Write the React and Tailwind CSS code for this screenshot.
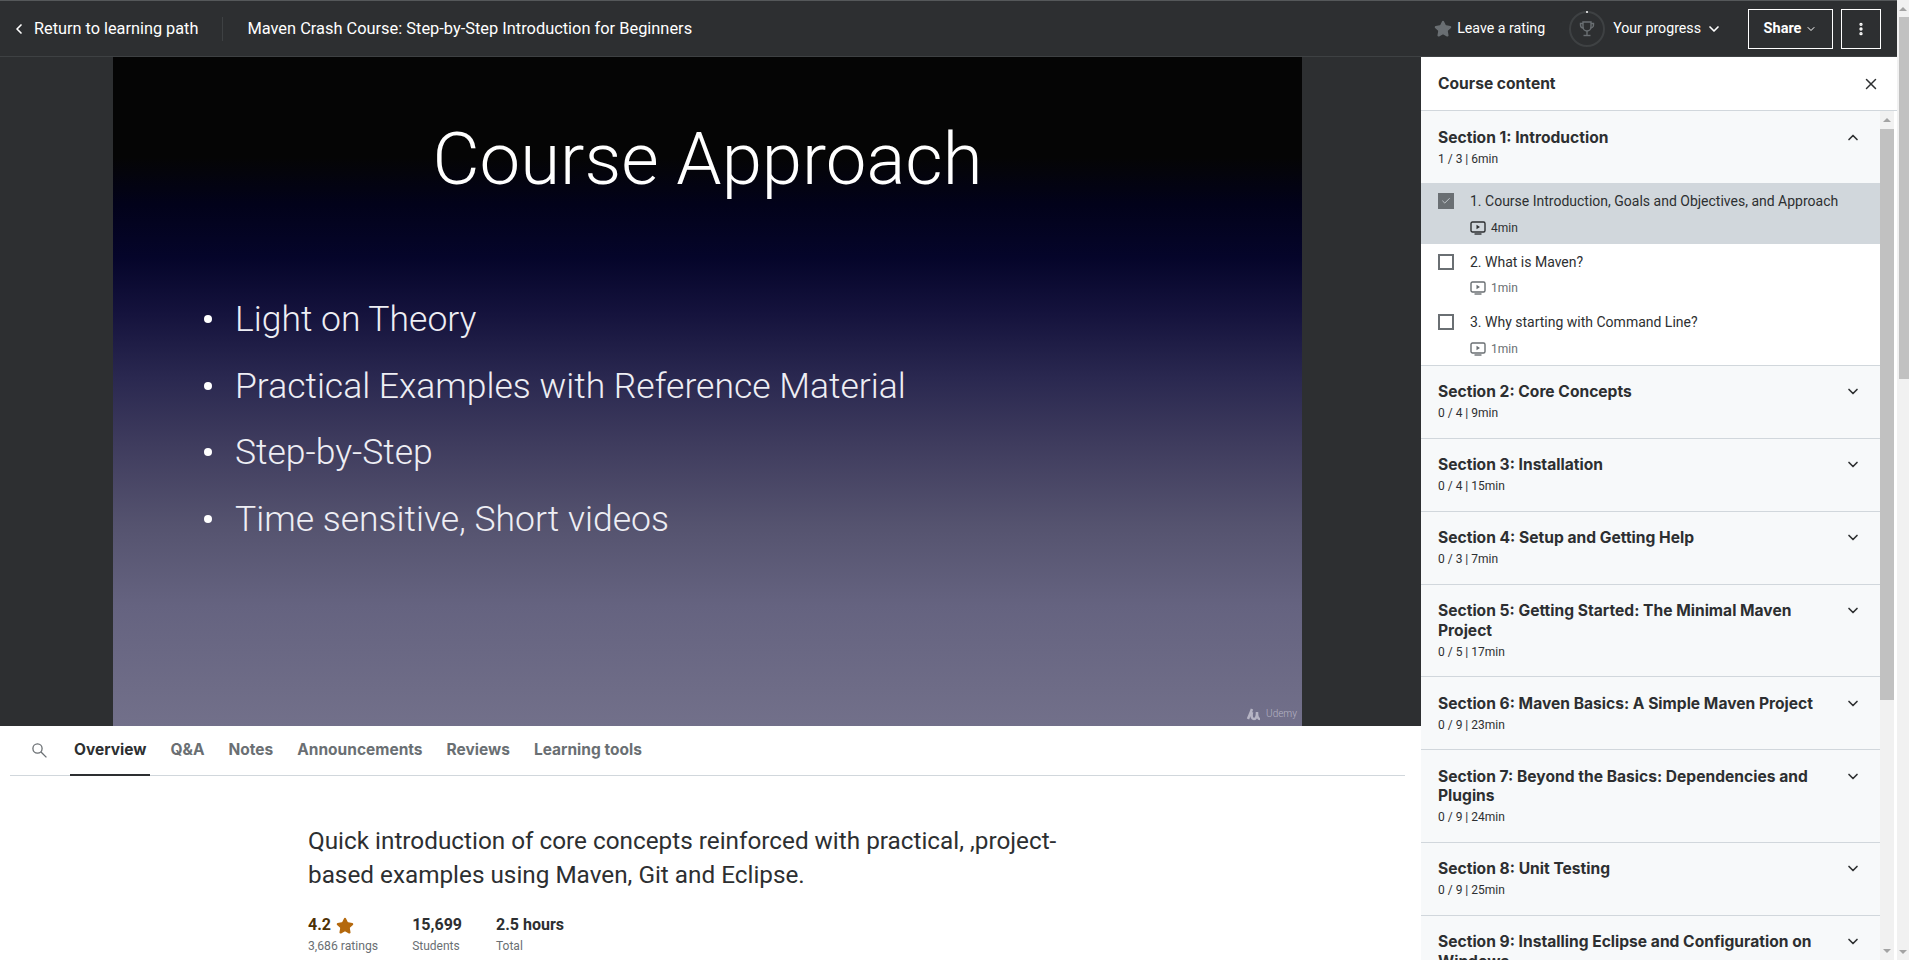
import React from 'react';
import { ChevronLeft, ChevronDown, ChevronUp, Star, EllipsisVertical, X, Check } from 'lucide-react';

const lectures = [
  { title: '1. Course Introduction, Goals and Objectives, and Approach', time: '4min', done: true },
  { title: '2. What is Maven?', time: '1min' },
  { title: '3. Why starting with Command Line?', time: '1min' },
];

const sections = [
  { title: 'Section 2: Core Concepts', meta: '0 / 4 | 9min' },
  { title: 'Section 3: Installation', meta: '0 / 4 | 15min' },
  { title: 'Section 4: Setup and Getting Help', meta: '0 / 3 | 7min' },
  { title: 'Section 5: Getting Started: The Minimal Maven Project', meta: '0 / 5 | 17min' },
  { title: 'Section 6: Maven Basics: A Simple Maven Project', meta: '0 / 9 | 23min' },
  { title: 'Section 7: Beyond the Basics: Dependencies and Plugins', meta: '0 / 9 | 24min' },
  { title: 'Section 8: Unit Testing', meta: '0 / 9 | 25min' },
  { title: 'Section 9: Installing Eclipse and Configuration on Windows', meta: '0 / 6 | 12min' },
];

const tabs = ['Overview', 'Q&A', 'Notes', 'Announcements', 'Reviews', 'Learning tools'];
const bullets = ['Light on Theory', 'Practical Examples with Reference Material', 'Step-by-Step', 'Time sensitive, Short videos'];

function VideoIcon({ dark }) {
  return (
    <svg viewBox="0 0 16 14" className={`w-4 h-[14px] shrink-0 ${dark ? 'text-[#2d2f31]' : 'text-[#6a6f73]'}`} fill="none" stroke="currentColor">
      <rect x="1" y="1" width="14" height="10" rx="1.5" strokeWidth="1.4" />
      <path d="M6.5 3.8 10 6l-3.5 2.2z" fill="currentColor" stroke="none" />
      <path d="M4.5 13h7" strokeWidth="1.4" />
    </svg>
  );
}

function TrophyIcon() {
  return (
    <svg viewBox="0 0 18 18" className="w-[18px] h-[18px] text-[#6a6f73]" fill="none" stroke="currentColor" strokeWidth="1.4">
      <path d="M5 2h8v5a4 4 0 0 1-8 0z" />
      <path d="M5 3.5H2.5v1.5a3 3 0 0 0 3 3" />
      <path d="M13 3.5h2.5v1.5a3 3 0 0 1-3 3" />
      <path d="M9 11v4" />
      <path d="M5.5 15.5h7" />
    </svg>
  );
}

function SearchIcon() {
  return (
    <svg viewBox="0 0 15 15" className="w-[15px] h-[15px] text-[#6a6f73]" fill="none" stroke="currentColor" strokeWidth="1.3">
      <circle cx="5.5" cy="5.5" r="4.6" />
      <path d="M9 9l5.4 5.4" />
    </svg>
  );
}

function ScrollArrow({ down }) {
  return <div className={`w-0 h-0 border-x-[4px] border-x-transparent ${down ? 'border-t-[4px] border-t-[#a3a3a3]' : 'border-b-[4px] border-b-[#a3a3a3]'}`} />;
}

function SectionRow({ title, meta, open }) {
  const Icon = open ? ChevronUp : ChevronDown;
  return (
    <div className={`flex justify-between pl-[17px] pr-[19px] pt-[16.5px] pb-[16.5px] bg-[#f7f9fa] ${open ? '' : 'border-b border-[#d1d7dc]'}`}>
      <div className="w-[390px]">
        <div className="font-['Inter',sans-serif] text-[15.6px] leading-[19.5px] font-bold text-[#2d2f31]">{title}</div>
        <div className="mt-[3.5px] text-[12px] leading-4 text-[#2d2f31]">{meta}</div>
      </div>
      <Icon className="w-[16px] h-[19px] text-[#2d2f31]" strokeWidth={2.5} />
    </div>
  );
}

function LectureRow({ title, time, done }) {
  return (
    <div className={`h-[60.5px] flex pl-[17px] pt-[8px] ${done ? 'bg-[#d1d7dc]' : 'bg-white'}`}>
      <div className={`mt-[2px] w-4 h-4 shrink-0 flex items-center justify-center ${done ? 'bg-[#6a6f73]' : 'border-2 border-[#6a6f73]'}`}>
        {done && <Check className="w-[10px] h-[10px] text-[#d1d7dc]" strokeWidth={2} />}
      </div>
      <div className="ml-4">
        <div className="text-[14px] leading-5 text-[#2d2f31]">{title}</div>
        <div className="mt-[8.5px] flex items-center gap-[5px] h-4">
          <VideoIcon dark={done} />
          <span className={`text-[12px] ${done ? 'text-[#2d2f31]' : 'text-[#6a6f73]'}`}>{time}</span>
        </div>
      </div>
    </div>
  );
}

export default function App() {
  return (
    <div className="h-[960px] w-full flex overflow-hidden bg-white font-['Roboto',sans-serif]">
      <div className="w-[1897px] shrink-0 flex flex-col">
        {/* Top bar */}
        <header className="h-[57px] shrink-0 flex items-center bg-[#2d2f31] border-t border-t-[#55585a] border-b border-b-[#3e4143] text-white text-[14px]">
          <ChevronLeft className="w-4 h-4 ml-[11px]" strokeWidth={2.5} />
          <span className="ml-[7px] mt-px text-[16.3px]">Return to learning path</span>
          <div className="w-px h-6 bg-[#3e4143] ml-6" />
          <span className="ml-6 mt-px text-[16.4px]">Maven Crash Course: Step-by-Step Introduction for Beginners</span>
          <div className="ml-auto flex items-center pr-4">
            <Star className="w-[18px] h-[18px] text-[#6a6f73]" fill="currentColor" />
            <span className="ml-[5px] mt-px text-[14.2px]">Leave a rating</span>
            <div className="relative ml-6 w-9 h-9 rounded-full border-2 border-[#3e4143] flex items-center justify-center">
              <TrophyIcon />
              <div className="absolute -top-[2px] w-[2px] h-[2px] rounded-full bg-white" />
            </div>
            <span className="ml-2 mt-px text-[14.2px]">Your progress</span>
            <ChevronDown className="w-4 h-4 ml-[5px]" strokeWidth={2.5} />
            <button className="ml-[26px] w-[85px] h-10 border border-white flex items-center justify-center gap-1 font-bold text-[14.5px]">
              Share <ChevronDown className="w-3 h-3" strokeWidth={2} />
            </button>
            <button className="ml-2 w-10 h-10 border border-white flex items-center justify-center">
              <EllipsisVertical className="w-4 h-4" strokeWidth={3} />
            </button>
          </div>
        </header>

        <div className="flex flex-1 min-h-0">
          <main className="flex-1 min-w-0 overflow-hidden">
            {/* Video */}
            <div className="h-[669px] bg-[#2d2f31] pl-[113px]">
              <div className="relative w-[1189px] h-full bg-[linear-gradient(180deg,#050505_0%,#050505_15%,#02021a_22%,#05052a_30%,#14123c_38%,#2a2850_48%,#3f3c5e_58%,#55536f_70%,#656380_82%,#72708a_100%)] text-white font-light">
                <div className="pt-[63px] text-center text-[72.5px] leading-[80px]">Course Approach</div>
                <ul className="mt-[98px] pl-[91px] flex flex-col gap-[24.5px] text-[35.5px] leading-[42px] text-[#eeeef4]">
                  {bullets.map((b) => (
                    <li key={b} className="flex items-center">
                      <span className="w-2 h-2 rounded-full bg-white mr-[23px]" />
                      {b}
                    </li>
                  ))}
                </ul>
                <div className="absolute right-[5px] bottom-[5px] flex items-center gap-1 text-[#b6b4c4] text-[10px]">
                  <svg viewBox="0 0 16 14" className="w-4 h-[14px]" fill="none" stroke="currentColor" strokeWidth="2.5">
                    <path d="M2 12c1-3 3-7 4-10M6 5c-1 5 0 7 2 7s3-2 3-7c0 4 1 7 3 7" />
                  </svg>
                  Udemy
                </div>
              </div>
            </div>

            {/* Tabs */}
            <nav className="mx-[10px] mr-[16px] h-[50px] flex items-stretch border-b border-[#d1d7dc] font-['Inter',sans-serif] text-[15.5px] font-bold">
              <div className="w-[60px] flex items-center justify-center pr-[2px]">
                <SearchIcon />
              </div>
              <div className="flex gap-4">
                {tabs.map((t, i) => (
                  <div key={t} className={`px-1 flex items-center border-b-2 -mb-px ${i === 0 ? 'text-[#2d2f31] border-[#2d2f31]' : 'text-[#6a6f73] border-transparent'}`}>{t}</div>
                ))}
              </div>
            </nav>

            {/* Overview */}
            <div className="pl-[308px] pt-[48px]">
              <p className="w-[790px] text-[24.3px] leading-[34px] text-[#2d2f31]">
                Quick introduction of core concepts reinforced with practical, ,project-based examples using Maven, Git and Eclipse.
              </p>
              <div className="mt-[21px] flex gap-[34px] text-[#2d2f31]">
                <div>
                  <div className="flex items-center gap-[5px] text-[16px] font-bold text-[#4d3105]">
                    4.2 <Star className="w-[18px] h-[18px] mt-[2px] text-[#b4690e]" fill="currentColor" />
                  </div>
                  <div className="text-[12.2px] text-[#6a6f73]">3,686 ratings</div>
                </div>
                <div>
                  <div className="text-[16px] font-bold">15,699</div>
                  <div className="text-[12px] text-[#6a6f73]">Students</div>
                </div>
                <div>
                  <div className="text-[16px] font-bold">2.5 hours</div>
                  <div className="text-[12px] text-[#6a6f73]">Total</div>
                </div>
              </div>
            </div>
          </main>

          {/* Course content sidebar */}
          <aside className="w-[476px] shrink-0 flex flex-col">
            <div className="h-[54px] shrink-0 flex items-center justify-between pl-[17px] pr-[17px] bg-white border-b border-[#d1d7dc]">
              <span className="font-['Inter',sans-serif] text-[15.6px] font-bold text-[#2d2f31]">Course content</span>
              <X className="w-[18px] h-[18px] text-[#2d2f31]" strokeWidth={2} />
            </div>
            <div className="flex flex-1 min-h-0">
              <div className="w-[459px] shrink-0 overflow-hidden">
                <SectionRow title="Section 1: Introduction" meta="1 / 3 | 6min" open />
                {lectures.map((l) => <LectureRow key={l.title} {...l} />)}
                <div className="border-b border-[#d1d7dc]" />
                {sections.map((s) => <SectionRow key={s.title} {...s} />)}
              </div>
              <div className="w-[14px] shrink-0 bg-[#f1f1f1] flex flex-col items-center">
                <div className="h-[18px] flex items-center"><ScrollArrow /></div>
                <div className="w-full h-[571px] bg-[#c1c1c1]" />
                <div className="mt-auto h-[18px] flex items-center"><ScrollArrow down /></div>
              </div>
            </div>
          </aside>
        </div>
      </div>

      {/* Page scrollbar */}
      <div className="w-[12px] shrink-0 bg-[#f1f1f1] flex flex-col items-center">
        <div className="h-[17px] flex items-center"><ScrollArrow /></div>
        <div className="w-[10px] ml-[2px] h-[362px] bg-[#c1c1c1]" />
        <div className="mt-auto h-[17px] flex items-center"><ScrollArrow down /></div>
      </div>
    </div>
  );
}
